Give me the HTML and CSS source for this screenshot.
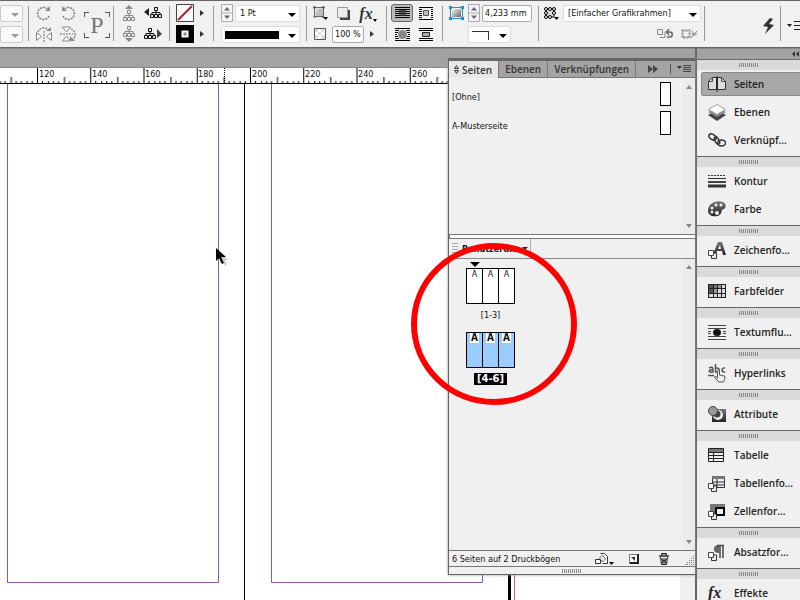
FILE: index.html
```html
<!DOCTYPE html>
<html lang="de">
<head>
<meta charset="utf-8">
<title>Layout</title>
<link rel="stylesheet" href="styles.css">
</head>
<body>
<svg class="defs" aria-hidden="true">
  <defs>
    <linearGradient id="metal" x1="0" y1="0" x2="1" y2="1"><stop offset="0" stop-color="#f4f4f4"/><stop offset="1" stop-color="#666"/></linearGradient>
    <linearGradient id="shade" x1="0" y1="0" x2="0" y2="1"><stop offset="0" stop-color="#777"/><stop offset="1" stop-color="#222"/></linearGradient>
    <symbol id="tree" viewBox="0 0 12 11"><path d="M6 3.500v2M2 8V5.500h8V8M6 5v3" fill="none" stroke="currentColor"/><path d="M4.500.500h3v3h-3zM.500 7.500h3v3h-3zM4.500 7.500h3v3h-3zM8.500 7.500h3v3h-3z" fill="#f0f0f0" stroke="currentColor"/></symbol>
    <symbol id="rotate" viewBox="0 0 16 16"><path d="M13 11A6 6 0 1 1 11 3.500" fill="none" stroke="#777" stroke-width="1.500" stroke-dasharray="2 1"/><path d="M9 6h5V1z" fill="#888"/></symbol>
    <symbol id="overlap" viewBox="0 0 9 9"><path d="M3.500 3v5.500h5V3z" fill="#eee" stroke="#333"/><path d="M.500.500h5v5h-5z" fill="#fff" stroke="#444"/></symbol>
  </defs>
</svg>

<header class="toolbar">
  <div class="group group-first">
    <div class="row"><span class="pick pick-off"><select class="field" aria-label="X-Skalierung" disabled><option></option></select></span></div>
    <div class="row"><span class="pick pick-off"><select class="field" aria-label="Y-Skalierung" disabled><option></option></select></span></div>
  </div>
  <div class="group group-rotate">
    <div class="rows">
      <div class="row">
        <button class="tool" aria-label="Rechts drehen"><svg width="16" height="16"><use href="#rotate"/></svg></button>
        <button class="tool" aria-label="Links drehen"><svg class="mirror" width="16" height="16"><use href="#rotate"/></svg></button>
      </div>
      <div class="row">
        <button class="tool" aria-label="Horizontal spiegeln"><svg width="18" height="16" viewBox="0 0 18 16"><path d="M3 6A6 6 0 0 1 14 5" fill="none" stroke="#888" stroke-width="1.500" stroke-dasharray="2 1"/><path d="M11 5h5V1z" fill="#888"/><path d="M1.500 6.500v8l5-4zM16.500 6.500v8l-5-4z" fill="#fff" stroke="#888"/><path d="M9 5v11" stroke="#666" stroke-dasharray="2 1"/></svg></button>
        <button class="tool" aria-label="Vertikal spiegeln"><svg width="18" height="16" viewBox="0 0 18 16"><path d="M12 3A6 6 0 0 1 13 14" fill="none" stroke="#888" stroke-width="1.500" stroke-dasharray="2 1"/><path d="M11 10v5h5z" fill="#888"/><path d="M3.500 1h8l-4 5zM3.500 15h8l-4-5z" fill="#fff" stroke="#888"/><path d="M1 8h13" stroke="#666" stroke-dasharray="2 1"/></svg></button>
      </div>
    </div>
    <div class="proxy">P</div>
  </div>
  <div class="group group-tree">
    <div class="row">
      <button class="tool dim" aria-label="Container auswählen"><svg width="12" height="16" viewBox="0 0 12 16"><path d="M2 4h8L6 0z" fill="#888"/><use href="#tree" y="5" width="12" height="11"/></svg></button>
      <button class="tool" aria-label="Vorheriges Objekt"><svg width="18" height="12" viewBox="0 0 18 12"><path d="M5 1v8L0 5z" fill="#222"/><use href="#tree" x="6" y="0" width="12" height="11"/></svg></button>
    </div>
    <div class="row">
      <button class="tool dim" aria-label="Inhalt auswählen"><svg width="12" height="16" viewBox="0 0 12 16"><path d="M2 12h8l-4 4z" fill="#888"/><use href="#tree" width="12" height="11"/></svg></button>
      <button class="tool" aria-label="Nächstes Objekt"><svg width="18" height="12" viewBox="0 0 18 12"><path d="M13 1v9l5-4z" fill="#444"/><use href="#tree" width="12" height="11"/></svg></button>
    </div>
  </div>
  <div class="group group-fill">
    <div class="row">
      <button class="swatch" aria-label="Fläche"><svg width="18" height="18"><path d="M.5.5h17v17H.5z" fill="#fff" stroke="#444"/><path d="M2 16L16 2" stroke="#b01c26" stroke-width="2"/></svg></button>
      <button class="tool slim" aria-label="Flächenfarben"><svg width="4" height="6"><path d="M0 0v6l4-3z" fill="#333"/></svg></button>
    </div>
    <div class="row">
      <button class="swatch" aria-label="Kontur"><svg width="18" height="18"><path d="M0 0h18v18H0z"/><path d="M6.500 6.500h5v5h-5z" fill="#888" stroke="#fff" stroke-width="2"/></svg></button>
      <button class="tool slim" aria-label="Konturfarben"><svg width="4" height="6"><path d="M0 0v6l4-3z" fill="#333"/></svg></button>
    </div>
  </div>
  <div class="group group-stroke">
    <div class="row spaced">
      <button class="spin" aria-label="Konturstärke ändern"><svg width="12" height="18"><path d="M.5.5h11v17H.5zM1 9h10" fill="#f4f4f4" stroke="#aaa"/><path d="M3 6.500h6L6 3zM3 11.500h6L6 15z" fill="#667"/></svg></button>
      <span class="pick grow"><select class="field" aria-label="Konturstärke"><option>1 Pt</option></select></span>
    </div>
    <div class="row"><span class="pick pick-line grow"><select class="field" aria-label="Konturtyp"><option></option></select></span></div>
  </div>
  <div class="group group-fx">
    <div class="row">
      <button class="tool" aria-label="Effekt anwenden auf"><svg width="15" height="14" viewBox="0 0 15 14"><path d="M1.500 1.500h9v9h-9z" fill="#ddd" stroke="#666"/><path d="M3 10V7l3-4h4v7z" fill="#bbb"/><path d="M.500 1h2M9 1h2M.500 11h2M9 11h2M1 .500v2M11 .500v2" stroke="#333"/><path d="M10 11h5l-2.500 3z"/></svg></button>
      <button class="tool" aria-label="Schlagschatten"><svg width="14" height="13" viewBox="0 0 14 13"><path d="M3 3h10v10H3z" fill="#444"/><path d="M.500.500h10v10H.500z" fill="#eee" stroke="#999"/></svg></button>
      <button class="tool fx" aria-label="Objekteffekt"><i>fx</i><svg width="4" height="3"><path d="M0 0h4L2 3z"/></svg></button>
    </div>
    <div class="row">
      <button class="tool" aria-label="Deckkraft"><svg width="12" height="12" viewBox="0 0 12 12"><path d="M.5.5h11v11H.5z" fill="#fff" stroke="#555"/><path d="M1 1h3v3H1zM7 1h3v3H7zM4 4h3v3H4zM1 7h3v3H1zM7 7h4v4H7z" fill="#ddd"/></svg></button>
      <input class="field percent" aria-label="Deckkraft" value="100 %">
      <button class="tool slim" aria-label="Deckkraftregler"><svg width="4" height="6"><path d="M0 0v6l4-3z" fill="#333"/></svg></button>
    </div>
  </div>
  <div class="group group-wrap">
    <div class="row">
      <button class="tool pressed" aria-label="Kein Textumfluss"><svg width="15" height="12"><path d="M0 .5h15M0 2.500h15M0 4.500h15M0 6.500h15M0 8.500h15M0 10.500h15" stroke="#000"/><path d="M4 3h7v6H4z" fill="#333" opacity=".7"/></svg></button>
      <button class="tool" aria-label="Begrenzungsrahmen"><svg width="14" height="13"><path d="M0 .5h14M0 12.500h14M0 2.500h3M0 4.500h3M0 6.500h3M0 8.500h3M0 10.500h3M12 2.500h2M12 4.500h2M12 6.500h2M12 8.500h2M12 10.500h2" stroke="#000"/><path d="M4.500 3.500h5v5h-5z" fill="#bbb" stroke="#555"/></svg></button>
    </div>
    <div class="row">
      <button class="tool" aria-label="Objektform"><svg width="15" height="13"><path d="M0 .5h15M0 12.500h15M0 2.500h4M0 4.500h3M0 6.500h2M0 8.500h3M0 10.500h4M11 2.500h4M12 4.500h3M13 6.500h2M12 8.500h3M11 10.500h4" stroke="#000"/><circle cx="7.500" cy="6.500" r="4.500" fill="#888"/></svg></button>
      <button class="tool" aria-label="Objekt überspringen"><svg width="14" height="13"><path d="M0 .5h14M0 2.500h14M0 10.500h14M0 12.500h14" stroke="#000"/><path d="M3.500 4.500h7v4h-7z" fill="#aaa" stroke="#222"/></svg></button>
    </div>
  </div>
  <div class="group group-fit">
    <div class="row">
      <button class="tool" aria-label="Eckenoptionen"><svg width="15" height="14"><path d="M2 1.500h11M2 12.500h11M1.500 2v10M13.500 2v10" stroke="#2a8bc8"/><path d="M3 3h9v8H3z" fill="url(#metal)"/><path d="M0 0h3v3H0zM12 0h3v3h-3zM0 11h3v3H0zM12 11h3v3h-3z" fill="#2a8bc8"/></svg></button>
      <button class="spin" aria-label="Eckenradius ändern"><svg width="12" height="18"><path d="M.5.5h11v17H.5zM1 9h10" fill="#f4f4f4" stroke="#aaa"/><path d="M3 6.500h6L6 3zM3 11.500h6L6 15z" fill="#667"/></svg></button>
      <input class="field radius" aria-label="Eckenradius" value="4,233 mm">
    </div>
    <div class="row indent"><span class="pick pick-corner"><select class="field" aria-label="Eckenform"><option></option></select></span></div>
  </div>
  <div class="group group-style">
    <div class="row">
      <button class="tool" aria-label="Objektformat"><svg width="15" height="13" viewBox="0 0 15 13"><path d="M2 2h8v8H2z" fill="#ddd" stroke="#111"/><g fill="#fff" stroke="#000"><circle cx="2" cy="2" r="1.500"/><circle cx="6" cy="2" r="1.500"/><circle cx="10" cy="2" r="1.500"/><circle cx="2" cy="6" r="1.500"/><circle cx="10" cy="6" r="1.500"/><circle cx="2" cy="10" r="1.500"/><circle cx="6" cy="10" r="1.500"/></g><path d="M10 10h5l-2.500 3z"/></svg></button>
      <span class="pick grow"><select class="field" aria-label="Objektformate"><option>[Einfacher Grafikrahmen]</option></select></span>
    </div>
    <div class="row row-end">
      <button class="tool" aria-label="Abweichungen löschen"><svg width="16" height="10" fill="none" stroke="#888"><path d="M3 8.500h5v-6M.5.500h5v5h-5z"/><path d="M10 8h3c3 0 3-5 0-5h-3M12 0L9.500 3 12 6" stroke="#666" stroke-width="1.500"/></svg></button>
      <button class="tool" aria-label="Attribute löschen"><svg width="16" height="10" fill="none" stroke="#888"><path d="M1.500 1.500h7v7h-7z" stroke-width="2" stroke-dasharray="2 1"/><path d="M10 9l6-7M10 5h6M11 2l3 5"/></svg></button>
    </div>
  </div>
  <div class="group group-flash">
    <button class="tool" aria-label="Schnell anwenden"><svg width="11" height="16"><path d="M7 0L0 8l5 1-3 7 9-9-5-1 4-5z" fill="#333"/></svg></button>
  </div>
  <div class="group group-menu">
    <button class="tool slim" aria-label="Bedienfeldmenü"><svg width="15" height="9"><path d="M0 3h5L2.500 6z" fill="#222"/><path d="M7 .5h8M7 4.500h8M7 8.500h8" stroke="#222"/></svg></button>
  </div>
</header>

<div class="workspace">
  <main class="document">
    <div class="titleband"></div>
    <svg class="ruler" width="100%" height="16">
      <defs>
        <pattern id="ticks" x="37" y="0" width="53.250" height="16" patternUnits="userSpaceOnUse">
          <path d="M.5 0v16M27.500 9v6M5.500 13v2M11.500 13v2M16.500 13v2M21.500 13v2M32.500 13v2M37.500 13v2M43.500 13v2M48.500 13v2" stroke="#000"/>
        </pattern>
      </defs>
      <rect width="100%" height="16" fill="url(#ticks)"/>
      <path d="M224.500 0v15" stroke="#000" stroke-dasharray="1 1"/>
      <path d="M0 15.500h2000" stroke="#000"/>
      <g class="ruler-text"><text x="39" y="9">120</text><text x="92" y="9">140</text><text x="145" y="9">160</text><text x="198" y="9">180</text><text x="252" y="9">200</text><text x="305" y="9">220</text><text x="358" y="9">240</text><text x="412" y="9">260</text></g>
    </svg>
    <div class="canvas">
      <svg class="pages" width="100%" height="100%" fill="none">
        <path d="M7.500 0v498.500h211V0M271.500 0v498.500h211V0" stroke="#8a5aa8"/>
        <path d="M244.500 0v600" stroke="#000"/>
        <path d="M509.500 0v600" stroke="#000" stroke-width="3"/>
        <path d="M514.500 0v600" stroke="#c46a6a"/>
        <g transform="translate(216 164)"><path d="M4 4v11l3-2 2 5 2-1-2-5h3z" fill="#ccc"/><path d="M0 0v13l3-3 3 6 2-1-3-6h5z" fill="#000"/></g>
      </svg>
      <div class="scroll-lane"></div>
    </div>

    <section class="panel" aria-label="Seiten">
      <nav class="tabs">
        <button class="tab tab-on"><svg width="5" height="9" fill="none" stroke="#333"><path d="M.5 3.500l2-3 2 3zM.5 5.500l2 3 2-3z"/></svg>Seiten</button>
        <button class="tab">Ebenen</button>
        <button class="tab">Verknüpfungen</button>
        <button class="tab tab-icon" aria-label="Reduzieren"><svg width="10" height="8"><path d="M0 0v8l5-4zM5 0v8l5-4z" fill="#444"/></svg></button>
        <button class="tab-menu" aria-label="Seitenmenü"><svg width="14" height="8"><path d="M0 1h5L2.500 4z" fill="#333"/><path d="M6 .5h8M6 2.500h8M6 4.500h8M6 6.500h8" stroke="#444"/></svg></button>
      </nav>
      <div class="pane masters">
        <div class="pane-body">
          <div class="master"><span>[Ohne]</span><i class="sheet"></i></div>
          <div class="master"><span>A-Musterseite</span><i class="sheet"></i></div>
        </div>
        <div class="scroller"><i class="up"></i><i class="down"></i></div>
      </div>
      <div class="splitter"></div>
      <div class="sizebar"><button class="size-button"><svg width="6" height="11"><path d="M0 .5h6M0 3.500h6M0 6.500h6M0 9.500h6" stroke="#aaa"/></svg><span>Benutzerd...</span><i class="caret"></i></button></div>
      <div class="pane spreads">
        <div class="pane-body">
          <div class="spread">
            <i class="marker"></i>
            <div class="leaves"><span>A</span><span>A</span><span>A</span></div>
            <span class="range">[1-3]</span>
          </div>
          <div class="spread chosen">
            <div class="leaves"><span><b>A</b></span><span><b>A</b></span><span><b>A</b></span></div>
            <span class="range">[4-6]</span>
          </div>
        </div>
        <div class="scroller"><i class="up"></i><i class="down"></i></div>
      </div>
      <footer class="status">
        <span class="status-text">6 Seiten auf 2 Druckbögen</span>
        <button class="tool" aria-label="Seitenformat bearbeiten"><svg width="19" height="12" viewBox="0 0 19 12"><path d="M.5 6.500h5v4h-5zM5.500.500h4l3 3v7h-5" fill="#fff" stroke="#333"/><path d="M4.500 5l3-3 3 4-3 3z" fill="#eee" stroke="#666"/><path d="M14 9h5l-2.500 3z"/></svg></button>
        <button class="tool" aria-label="Neue Seite"><svg width="10" height="10"><path d="M.5.5h9v9h-9z" fill="#fff" stroke="#777"/><path d="M9 0v9H1" fill="none" stroke="#222" stroke-width="2"/><path d="M2 3h4v4z" fill="#333"/></svg></button>
        <button class="tool" aria-label="Löschen"><svg width="10" height="12" fill="none" stroke="#222"><path d="M0 3h10M3 2V.5h4V2" stroke-width="1.500"/><path d="M1.500 4l1 7.500h5l1-7.500M4 5v6M6 5v6M2 6l6 4M8 6l-6 4"/></svg></button>
        <svg class="corner" width="10" height="10"><path d="M9.500 0v10M7.500 2v8M5.500 4v6M3.500 6v4M1.500 8v2" stroke="#777" stroke-dasharray="1 1"/></svg>
      </footer>
      <div class="panel-foot"><i class="grip"></i></div>
    </section>
    <svg class="highlight" width="166" height="162"><ellipse cx="83" cy="81" rx="80" ry="78" fill="none" stroke="#f00" stroke-width="6"/></svg>
  </main>

  <aside class="dock">
    <div class="dock-head"><svg width="8" height="6"><path d="M3 0v6L0 3zM7 0v6L4 3z" fill="#333"/></svg></div>
    <div class="dock-group"><i class="grip"></i>
      <button class="dock-item current"><svg width="18" height="16"><path d="M.5 13.500V5.500l4-4h4v12zM17.500 13.500V5.500l-4-4h-4v12z" fill="#ddd" stroke="#333"/><path d="M1 5.500h3.500V2M17 5.500h-3.500V2" fill="none" stroke="#444"/><path d="M9 0v16" stroke="#222"/></svg>Seiten</button>
      <button class="dock-item"><svg width="18" height="17"><path d="M0 11l9-5 9 5-9 6z" fill="#444"/><path d="M0 8l9-5 9 5-9 5z" fill="#888"/><path d="M.5 5.500l8.500-5 8.500 5-8.500 5z" fill="#fff" stroke="#999"/></svg>Ebenen</button>
      <button class="dock-item"><svg width="18" height="14" fill="none" stroke="#333" stroke-width="1.500"><ellipse cx="4.500" cy="4" rx="4" ry="2.500" transform="rotate(35 4.500 4)"/><ellipse cx="9" cy="7.500" rx="4" ry="2" transform="rotate(60 9 7.500)"/><ellipse cx="13.500" cy="10" rx="4" ry="3"/></svg>Verknüpf...</button>
    </div>
    <div class="dock-group"><i class="grip"></i>
      <button class="dock-item"><svg width="18" height="14"><path d="M0 1.500h18" stroke="#333" stroke-dasharray="2 1"/><path d="M0 4.500h18" stroke="#333"/><path d="M0 8h18" stroke="#444" stroke-width="2"/><path d="M0 12h18" stroke="#333" stroke-width="3"/></svg>Kontur</button>
      <button class="dock-item"><svg width="18" height="16"><path d="M0 9C1-1 16-2 17.500 4c1 5-4 3-4 7-1 6-14 6-13.500-2z" fill="url(#shade)"/><g fill="#eee"><circle cx="8" cy="4" r="1.500"/><circle cx="13" cy="4" r="1.500"/><circle cx="4" cy="7" r="1.500"/><circle cx="4" cy="11" r="1.500"/><circle cx="9" cy="12" r="2"/></g></svg>Farbe</button>
    </div>
    <div class="dock-group"><i class="grip"></i>
      <button class="dock-item"><svg width="18" height="18"><path d="M5 13L10 1h4l4 13h-3l-1-4H9l-1 3zM10 8h3l-1-4z" fill="url(#shade)" fill-rule="evenodd"/><use href="#overlap" y="9" width="9" height="9"/></svg>Zeichenfo...</button>
    </div>
    <div class="dock-group"><i class="grip"></i>
      <button class="dock-item"><svg width="18" height="14"><path d="M0 0h18v14H0z" fill="#222"/><path d="M1 1h4v3H1zM1 5h4v4H1z" fill="#555"/><path d="M6 1h3v3H6z" fill="#777"/><path d="M10 1h3v3h-3zM6 5h3v4H6z" fill="#999"/><path d="M14 1h3v3h-3zM10 5h3v4h-3zM14 5h3v4h-3zM1 10h4v3H1zM6 10h3v3H6zM10 10h3v3h-3zM14 10h3v3h-3z" fill="#ddd"/></svg>Farbfelder</button>
    </div>
    <div class="dock-group"><i class="grip"></i>
      <button class="dock-item"><svg width="18" height="15"><path d="M0 .5h18M0 14.500h18M0 3.500h18M0 6.500h3M0 8.500h3M0 11.500h18M15 6.500h3M15 8.500h3" stroke="#444"/><ellipse cx="9" cy="7.500" rx="4" ry="3.500" fill="#111"/></svg>Textumflu...</button>
    </div>
    <div class="dock-group"><i class="grip"></i>
      <button class="dock-item"><svg width="19" height="19" fill="none" stroke="#555"><path d="M1 4c4-2 4 0 4 4-5 1-5-3 0-2M7.500 0v8c5 1 5-5 0-4M17 4c-4-1-4 5 0 4M0 11.500h6" stroke-width="1.500"/><path d="M9.500 14V7c0-1 2-1 2 0v4l5 1c1 2 0 4-1 6h-5l-4-5c0-1 1-1 3 1" fill="#eee"/></svg>Hyperlinks</button>
    </div>
    <div class="dock-group"><i class="grip"></i>
      <button class="dock-item"><svg width="18" height="17"><path d="M4 3h14v13H4z" fill="url(#shade)"/><circle cx="10" cy="9" r="5" fill="#eee"/><circle cx="9" cy="8" r="3.500" fill="#444"/><circle cx="5" cy="5" r="4.500" fill="#999" stroke="#444"/></svg>Attribute</button>
    </div>
    <div class="dock-group"><i class="grip"></i>
      <button class="dock-item"><svg width="16" height="14"><path d="M.5.5h15v13H.5z" fill="#eee" stroke="#222"/><path d="M1 1h14v3H1z" fill="#777"/><path d="M1 4.500h14M1 7.500h14M1 10.500h14M5.500 4v9" stroke="#222"/></svg>Tabelle</button>
      <button class="dock-item"><svg width="18" height="17"><path d="M4.500 1.500h12v11h-12z" fill="#eee" stroke="#333"/><path d="M4 1h13v3H4z" fill="#777"/><path d="M5 7h12M5 10h12M9 4v8" stroke="#333"/><use href="#overlap" y="8" width="9" height="9"/></svg>Tabellenfo...</button>
      <button class="dock-item"><svg width="18" height="17"><path d="M2 1h15v12H2z" fill="#777"/><path d="M8 5h8v7H8z" fill="#eee" stroke="#000" stroke-width="2"/><use href="#overlap" y="8" width="9" height="9"/></svg>Zellenfor...</button>
    </div>
    <div class="dock-group"><i class="grip"></i>
      <button class="dock-item"><svg width="18" height="17"><path d="M6 5c0-3 2-4 5-4v8c-3 0-5-1-5-4z" fill="#666"/><path d="M9 1.500h7M12 1v13M15 1v13" stroke="#444" stroke-width="1.500"/><use href="#overlap" y="8" width="9" height="9"/></svg>Absatzfor...</button>
    </div>
    <div class="dock-group"><i class="grip"></i>
      <button class="dock-item"><i class="fx-mark">fx</i>Effekte</button>
    </div>
  </aside>
</div>
</body>
</html>
```
FILE: styles.css
```css
* { box-sizing: border-box; }
html, body { height: 100%; margin: 0; }
body {
  display: flex;
  flex-direction: column;
  overflow: hidden;
  background: #f0f0f0;
  color: #111;
  font: 9px/12px "DejaVu Sans Condensed", "DejaVu Sans", sans-serif;
}
button, select, input { margin: 0; padding: 0; border: 0; background: none; color: inherit; font: inherit; }
svg { display: block; flex: none; }
.defs { position: absolute; width: 0; height: 0; }

/* control bar */
.toolbar {
  display: flex;
  flex: none;
  height: 48px;
  padding-top: 2px;
  border-top: 1px solid #666;
  border-bottom: 1px solid #666;
  background: #f1f1f1;
}
.group { position: relative; flex: none; padding-top: 1px; }
.group + .group::before {
  content: "";
  position: absolute;
  left: 0;
  top: 3px;
  bottom: 6px;
  border-left: 1px solid #999;
}
.row { display: flex; align-items: center; height: 18px; }
.row + .row { margin-top: 3px; }
.spaced { gap: 2px; }
.indent { padding-left: 24px; }
.row-end { justify-content: flex-end; }
.grow { flex: 1; }
.group-first { width: 28px; }
.group-rotate { display: flex; gap: 4px; width: 85px; padding-left: 4px; }
.group-tree { width: 56px; padding-left: 4px; }
.group-fill { width: 44px; padding-left: 7px; }
.group-stroke { width: 93px; padding-left: 8px; padding-right: 6px; }
.group-fx { width: 80px; padding-left: 2px; }
.group-wrap { width: 56px; padding-left: 4px; }
.group-fit { width: 96px; padding-left: 2px; }
.group-style { width: 166px; padding-left: 1px; padding-right: 3px; }
.group-flash { display: flex; flex: 1; align-items: center; justify-content: flex-end; }
.group-menu { display: flex; align-items: center; width: 20px; padding-left: 6px; }

.tool { display: flex; flex: none; align-items: center; justify-content: center; width: 24px; height: 18px; }
.slim { width: 16px; }
.dim { color: #888; }
.mirror { transform: scaleX(-1); }
.pressed { width: 22px; margin: 0 1px; border: 1px solid #666; border-radius: 3px; background: #bbb; }
.swatch, .spin { flex: none; }
.fx { align-items: flex-end; font: bold 16px/16px "Liberation Serif", serif; color: #333; }
.proxy {
  width: 26px;
  height: 26px;
  margin-top: 8px;
  color: #777;
  font: 24px/26px "Liberation Serif", serif;
  text-align: center;
  background:
    linear-gradient(#555, #555) 0 0 / 5px 1px, linear-gradient(#555, #555) 0 0 / 1px 5px,
    linear-gradient(#555, #555) 100% 0 / 5px 1px, linear-gradient(#555, #555) 100% 0 / 1px 5px,
    linear-gradient(#555, #555) 0 100% / 5px 1px, linear-gradient(#555, #555) 0 100% / 1px 5px,
    linear-gradient(#555, #555) 100% 100% / 5px 1px, linear-gradient(#555, #555) 100% 100% / 1px 5px;
  background-repeat: no-repeat;
}
.field { height: 17px; padding: 0 4px; border: 1px solid #ddd; border-radius: 2px; background: #fff; }
select.field { width: 100%; appearance: none; }
.pick { position: relative; display: flex; }
.pick::after {
  content: "";
  position: absolute;
  right: 4px;
  top: 8px;
  border: 4px solid transparent;
  border-top-color: #000;
  border-bottom: 0;
  pointer-events: none;
}
.pick-off { width: 23px; }
.pick-off .field { border-color: #bbb; }
.pick-off::after { border-top-color: #999; }
.pick-line::before, .pick-corner::before { content: ""; position: absolute; pointer-events: none; }
.pick-line::before { left: 4px; right: 21px; top: 5px; height: 8px; background: #000; }
.pick-corner { width: 43px; }
.pick-corner::before { left: 4px; top: 5px; width: 16px; height: 8px; border: 1px solid #333; border-left: 0; border-bottom: 0; }
.percent { width: 32px; padding: 0 2px; border-color: #aaa; }
.radius { width: 50px; margin-left: 2px; padding: 0 2px; border-color: #aaa; }

/* document window */
.workspace { display: flex; flex: 1; min-height: 0; }
.document { position: relative; display: flex; flex: 1; flex-direction: column; min-width: 0; }
.titleband { flex: none; height: 20px; border-top: 1px solid #888; border-bottom: 1px solid #888; background: #a3a3a3; }
.ruler { background: #fff; }
.ruler-text { font: 9px "DejaVu Sans Condensed", "DejaVu Sans", sans-serif; fill: #111; }
.canvas { display: flex; flex: 1; min-height: 0; background: #fff; }
.pages { flex: 1; width: auto; min-width: 0; }
.scroll-lane { width: 15px; background: #f0f0f0; }

/* floating panel */
.panel {
  position: absolute;
  top: 10px;
  right: 0;
  bottom: 25px;
  display: flex;
  flex-direction: column;
  width: 247px;
  border: 1px solid #666;
  border-top-width: 3px;
  border-right: 0;
  background: #f0f0f0;
  box-shadow: 0 0 3px #999;
}
.tabs { display: flex; flex: none; height: 17px; border-bottom: 1px solid #777; background: #a4a4a4; color: #333; font: 600 10px/14px "Open Sans", sans-serif; }
.tab { display: flex; align-items: center; gap: 3px; padding: 0 6px; border-right: 1px solid #777; }
.tab-on { height: 17px; padding-left: 5px; background: #e8e8e8; }
.tab-icon { flex: 1; justify-content: flex-end; border: 0; }
.tab-menu { display: flex; align-items: center; height: 10px; margin: 3px 4px 0 6px; padding-left: 6px; border-left: 1px solid #555; }
.pane { display: flex; min-height: 0; }
.pane-body { flex: 1; }
.masters { flex: none; height: 156px; padding-top: 1px; }
.master { display: flex; align-items: center; justify-content: space-between; height: 29px; padding: 0 12px 0 3px; }
.master span { padding-top: 7px; }
.sheet { width: 11px; height: 24px; border: 1px solid #000; background: #fff; }
.scroller { display: flex; flex-direction: column; justify-content: space-between; width: 12px; padding: 6px 3px; background: #ececec; }
.up, .down { border: 3px solid transparent; }
.up { border-top: 0; border-bottom: 4px solid #888; }
.down { border-bottom: 0; border-top: 4px solid #888; }
.splitter { flex: none; height: 5px; border: 1px solid #777; border-right: 0; background: #fff; }
.sizebar { display: flex; flex: none; height: 20px; border-bottom: 1px solid #888; }
.size-button { display: flex; align-items: center; gap: 4px; width: 82px; padding: 0 3px; border-right: 1px solid #aaa; font-weight: bold; }
.size-button span { flex: 1; text-align: left; }
.caret { border: 3px solid transparent; border-top-color: #222; border-bottom: 0; }
.spreads { flex: 1; }
.spreads .pane-body { padding: 3px 0 0 17px; }
.spread { display: flex; flex-direction: column; align-items: center; width: 49px; }
.marker { align-self: flex-start; margin: 0 0 1px 4px; border: 5px solid transparent; border-top-color: #000; border-bottom: 0; }
.leaves { display: grid; grid-template-columns: repeat(3, 1fr); gap: 1px; width: 100%; height: 36px; border: 1px solid #000; background: #000; text-align: center; line-height: 11px; }
.leaves span { background: #fff; }
.range { margin-top: 5px; padding: 0 3px; line-height: 13px; }
.chosen { margin-top: 10px; }
.chosen .leaves span { background: #99ccff; }
.chosen b { display: block; width: 9px; margin: 0 auto; background: #fff; font-size: 10px; line-height: 10px; }
.chosen .range { background: #000; color: #fff; font: bold 10px/12px "DejaVu Sans", sans-serif; }
.status { display: flex; flex: none; align-items: center; height: 17px; border-top: 1px solid #777; border-bottom: 1px solid #777; padding-left: 3px; }
.status-text { flex: 1; }
.status .tool { width: 30px; }
.corner { margin: 4px 1px 0 5px; }
.panel-foot { display: flex; flex: none; align-items: center; justify-content: center; height: 7px; }
.grip { flex: none; width: 20px; height: 4px; background: repeating-linear-gradient(90deg, #888 0 1px, transparent 1px 2px); }
.highlight { position: absolute; right: 118px; top: 195px; pointer-events: none; }

/* icon dock */
.dock { width: 105px; flex: none; overflow: hidden; border-left: 2px solid #666; font: 600 10px/14px "Open Sans", sans-serif; color: #222; }
.dock-head { display: flex; align-items: center; justify-content: flex-end; height: 12px; border-top: 1px solid #888; border-bottom: 1px solid #666; background: #a3a3a3; }
.dock-group { display: flex; flex-direction: column; padding-bottom: 2px; border-bottom: 1px solid #666; background: linear-gradient(#dadada 10px, #f0f0f0 10px); }
.dock-group .grip { align-self: center; margin: 3px 0; }
.dock-item { display: grid; grid-template-columns: 20px 1fr; gap: 6px; align-items: center; height: 24px; margin: 2px 0 2px 4px; padding-left: 6px; border: 1px solid transparent; border-right: 0; text-align: left; white-space: nowrap; }
.current { border-color: #888; border-radius: 3px 0 0 3px; background: #a8a8a8; }
.fx-mark { font: italic bold 16px/20px "Liberation Serif", serif; }
```
